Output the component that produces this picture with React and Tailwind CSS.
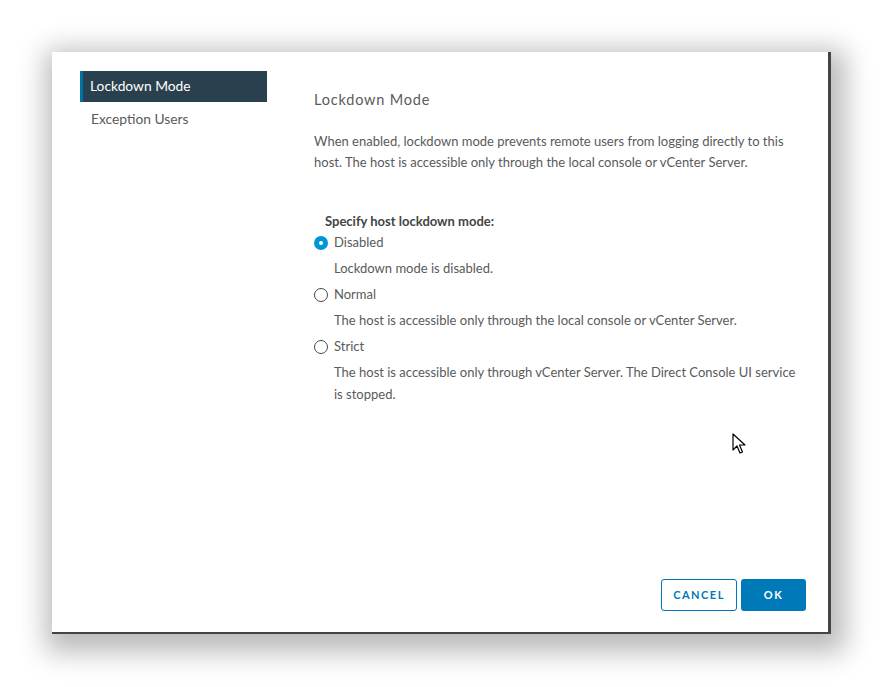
import React, { useState } from 'react';

const options = [
  { id: 'disabled', label: 'Disabled', desc: ['Lockdown mode is disabled.'] },
  { id: 'normal', label: 'Normal', desc: ['The host is accessible only through the local console or vCenter Server.'] },
  {
    id: 'strict',
    label: 'Strict',
    desc: ['The host is accessible only through vCenter Server. The Direct Console UI service', 'is stopped.'],
  },
];

function Radio({ checked }) {
  if (checked) {
    return (
      <span className="flex h-[14px] w-[14px] items-center justify-center rounded-full bg-[#0095d3]">
        <span className="h-[4px] w-[4px] rounded-full bg-white" />
      </span>
    );
  }
  return <span className="h-[14px] w-[14px] rounded-full border border-[#4a4a4a] bg-white" />;
}

function Cursor() {
  return (
    <svg className="absolute left-[732px] top-[433px]" width="14" height="22" viewBox="0 0 14 22">
      <path d="M1 1 L1 17 L5 13 L8 20 L10.5 19 L7.5 12 L13 12 Z" fill="#fff" stroke="#000" strokeWidth="1.2" strokeLinejoin="round" />
    </svg>
  );
}

export default function App() {
  const [mode, setMode] = useState('disabled');
  const [tab, setTab] = useState(0);

  return (
    <div className="relative h-[687px] w-[884px] overflow-hidden bg-white" style={{ fontFamily: 'Lato, "Open Sans", sans-serif' }}>
      <div className="absolute left-[52px] top-[52px] flex h-[582px] w-[779px] flex-col border-r-[3px] border-b-[2px] border-[#444] bg-white shadow-[4px_8px_26px_10px_rgba(0,0,0,0.28)]">
        <div className="flex flex-1">
          <nav className="w-[215px] pl-[28px] pt-[19px]">
            <button
              onClick={() => setTab(0)}
              className={`flex h-[31px] w-[187px] items-center border-l-[3px] pl-[7px] text-left text-[13.8px] ${tab === 0 ? 'border-[#0072a3] bg-[#29414e] text-white' : 'border-transparent text-[#5a5a5a]'}`}
            >
              Lockdown Mode
            </button>
            <button
              onClick={() => setTab(1)}
              className={`mt-[2px] flex h-[31px] w-[187px] items-center border-l-[3px] pl-[8px] text-left text-[13.8px] ${tab === 1 ? 'border-[#0072a3] bg-[#29414e] text-white' : 'border-transparent text-[#5a5a5a]'}`}
            >
              Exception Users
            </button>
          </nav>
          <main className="flex-1 pl-[47px] pr-[30px] pt-[37px] text-[#5a5a5a]">
            <h2 className="text-[14.5px] tracking-[0.8px]">Lockdown Mode</h2>
            <p className="mt-[20px] text-[13px] leading-[21px]">
              When enabled, lockdown mode prevents remote users from logging directly to this
              <br />
              host. The host is accessible only through the local console or vCenter Server.
            </p>
            <div className="mt-[39px] pl-[11px] text-[13px] font-bold leading-[18px] text-[#444]">Specify host lockdown mode:</div>
            <div className="flex flex-col">
              {options.map((o) => (
                <div key={o.id}>
                  <label className="flex h-[26px] cursor-pointer items-center gap-[6px] text-[13px]" onClick={() => setMode(o.id)}>
                    <Radio checked={mode === o.id} />
                    <span>{o.label}</span>
                  </label>
                  <div className="pb-[3px] pl-[20px] pt-[1px] text-[13px] leading-[22px]">
                    {o.desc.map((d) => (
                      <div key={d}>{d}</div>
                    ))}
                  </div>
                </div>
              ))}
            </div>
          </main>
        </div>
        <div className="flex justify-end gap-[4px] pb-[21px] pr-[22px]">
          <button className="h-[32px] w-[76px] rounded-[3px] border border-[#0079b8] text-[11px] font-bold tracking-[1.5px] text-[#0079b8]">
            CANCEL
          </button>
          <button className="h-[32px] w-[65px] rounded-[3px] bg-[#0079b8] text-[11px] font-bold tracking-[1.5px] text-white">
            OK
          </button>
        </div>
      </div>
      <Cursor />
    </div>
  );
}
